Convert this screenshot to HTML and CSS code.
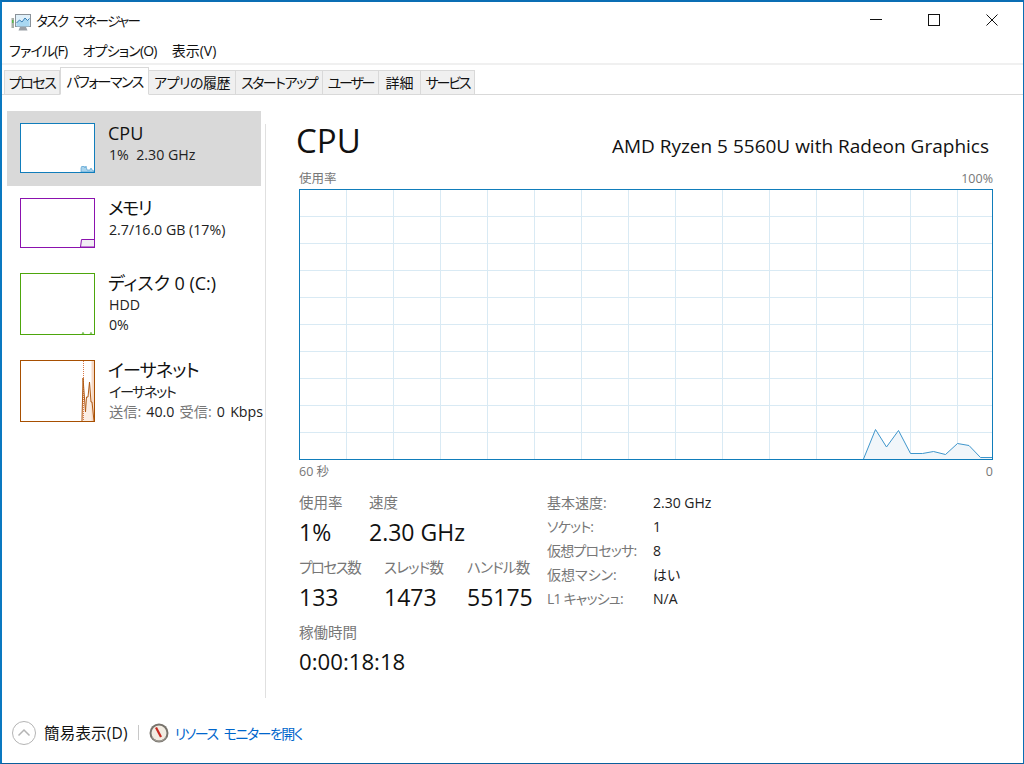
FILE: index.html
```html
<!DOCTYPE html>
<html lang="ja">
<head>
<meta charset="utf-8">
<title>タスク マネージャー</title>
<link rel="stylesheet" href="styles.css">
</head>
<body>
<div class="window">
  <header class="titlebar">
    <svg class="appicon" width="20" height="20" viewBox="0 0 20 20">
      <rect x="0.5" y="6" width="2.5" height="10" fill="#a8b0a8"/>
      <rect x="1" y="8" width="1.500" height="3" fill="#58b848"/>
      <rect x="4.500" y="2.500" width="15" height="12" fill="#dff0fa" stroke="#8a9299"/>
      <path d="M5.500 11l3-3 2.500 2 3-4 2.500 2.500 2-2v8h-13z" fill="#a9d8f2"/>
      <path d="M5.500 11l3-3 2.500 2 3-4 2.500 2.500 2-2" fill="none" stroke="#3a7fb5"/>
      <path d="M9 15h6l1.500 3.500h-9z" fill="#9aa0a6"/>
    </svg>
    <span class="apptitle">タスク マネージャー</span>
    <div class="controls">
      <svg class="ctl" width="46" height="38" viewBox="0 0 46 38"><path d="M11 17.500h12" stroke="#111" fill="none"/></svg>
      <svg class="ctl" width="58" height="38" viewBox="0 0 58 38"><rect x="23.500" y="12.500" width="11" height="11" stroke="#111" fill="none"/></svg>
      <svg class="ctl" width="60" height="38" viewBox="0 0 60 38"><path d="M23.500 12.500l11 11M34.500 12.500l-11 11" stroke="#111" fill="none"/></svg>
    </div>
  </header>
  <nav class="menubar">
    <span class="menuitem kana">ファイル(F)</span>
    <span class="menuitem kana">オプション(O)</span>
    <span class="menuitem">表示(V)</span>
  </nav>
  <div class="tabs">
    <span class="tab kana-wide w-proc">プロセス</span>
    <span class="tab kana-wide active w-perf">パフォーマンス</span>
    <span class="tab kana-thin w-hist">アプリの履歴</span>
    <span class="tab kana-wide w-start">スタートアップ</span>
    <span class="tab kana-max w-user">ユーザー</span>
    <span class="tab w-det">詳細</span>
    <span class="tab kana-max w-svc">サービス</span>
  </div>
  <div class="content">
    <aside class="sidebar">
      <div class="item selected">
        <svg class="thumb t-cpu" viewBox="0 0 73 48"><path d="M60 48v-4l1-2 1 1 1-1 1 2 1-2 1 4 3 0 1-2 1 2 2 1v1z" fill="#a9d3ec" stroke="#3f96cc" stroke-width=".6"/></svg>
        <div class="itemtext">
          <div class="itemname">CPU</div>
          <div class="itemsub">1%&nbsp; 2.30 GHz</div>
        </div>
      </div>
      <div class="item">
        <svg class="thumb t-mem" viewBox="0 0 73 48"><path d="M59.500 48l1-7.500h13v7.500z" fill="#f1eef4" stroke="#8b12ae"/></svg>
        <div class="itemtext">
          <div class="itemname kana-wide">メモリ</div>
          <div class="itemsub">2.7/16.0 GB (17%)</div>
        </div>
      </div>
      <div class="item tall">
        <svg class="thumb t-disk" viewBox="0 0 73 60"><path d="M61 60l1-2 1 2zM69 60l1-2 1 2z" fill="#7cc05a" stroke="#7cc05a" stroke-width=".6"/></svg>
        <div class="itemtext">
          <div class="itemname">ディスク 0 (C:)</div>
          <div class="itemsub">HDD</div>
          <div class="itemsub">0%</div>
        </div>
      </div>
      <div class="item tall">
        <svg class="thumb t-net" viewBox="0 0 73 60">
          <path d="M60 60l2-43 3 34 1-15h2l1-15 2 20 1 1 2 18z" fill="#fbeee4"/>
          <rect x="70.500" y="0" width="2.500" height="60" fill="#f6d9c6"/>
          <path d="M62.500 0v60" stroke="#d9794a" stroke-dasharray="1 1" fill="none"/>
          <path d="M61 60l1-43 2.500 34 1-15h1.500l1.500-15 1.500 20h1l2 19" fill="none" stroke="#b05a14" stroke-width="1"/>
        </svg>
        <div class="itemtext">
          <div class="itemname kana">イーサネット</div>
          <div class="itemsub kana-wide">イーサネット</div>
          <div class="itemsub spaced"><span class="dim">送信:</span> 40.0 <span class="dim">受信:</span> 0 Kbps</div>
        </div>
      </div>
    </aside>
    <div class="divider"></div>
    <main class="panel">
      <div class="heading">
        <h1 class="bigtitle">CPU</h1>
        <div class="model">AMD Ryzen 5 5560U with Radeon Graphics</div>
      </div>
      <div class="chartwrap">
        <div class="axis axis-top"><span>使用率</span><span>100%</span></div>
        <svg class="chart" width="692" height="269" viewBox="300 190 692 269">
          <path class="grid" d="M346.500 190v269M393.500 190v269M440.500 190v269M487.500 190v269M534.500 190v269M581.500 190v269M628.500 190v269M675.500 190v269M722.500 190v269M769.500 190v269M816.500 190v269M863.500 190v269M910.500 190v269M957.500 190v269M300 216.500h692M300 243.500h692M300 270.500h692M300 297.500h692M300 324.500h692M300 351.500h692M300 378.500h692M300 405.500h692M300 432.500h692"/>
          <path class="area" d="M863.500 459L875.500 429.500 886.500 447 898.500 430.500 910.500 453.500 922.500 453.500 933.500 451.500 945.500 454.500 957.500 443.500 969 445.500 980.500 457.500 992 457.500V459z"/>
          <path class="line" d="M863.500 459L875.500 429.500 886.500 447 898.500 430.500 910.500 453.500 922.500 453.500 933.500 451.500 945.500 454.500 957.500 443.500 969 445.500 980.500 457.500 992 457.500"/>
        </svg>
        <div class="axis axis-bottom"><span>60 秒</span><span>0</span></div>
      </div>
      <div class="stats">
        <div class="statcols">
          <div class="statrow">
            <div class="stat s70"><div class="statlabel">使用率</div><div class="statvalue">1%</div></div>
            <div class="stat"><div class="statlabel">速度</div><div class="statvalue">2.30 GHz</div></div>
          </div>
          <div class="statrow">
            <div class="stat s85"><div class="statlabel kana-wide">プロセス数</div><div class="statvalue">133</div></div>
            <div class="stat s83"><div class="statlabel kana">スレッド数</div><div class="statvalue">1473</div></div>
            <div class="stat"><div class="statlabel kana">ハンドル数</div><div class="statvalue">55175</div></div>
          </div>
          <div class="statrow">
            <div class="stat"><div class="statlabel">稼働時間</div><div class="statvalue uptime">0:00:18:18</div></div>
          </div>
        </div>
        <dl class="specs">
          <dt>基本速度:</dt><dd>2.30 GHz</dd>
          <dt class="kana">ソケット:</dt><dd>1</dd>
          <dt class="kana">仮想プロセッサ:</dt><dd>8</dd>
          <dt>仮想マシン:</dt><dd>はい</dd>
          <dt class="kana">L1 キャッシュ:</dt><dd>N/A</dd>
        </dl>
      </div>
    </main>
  </div>
  <footer class="footer">
    <svg class="fewer" width="24" height="24" viewBox="0 0 24 24"><circle cx="12" cy="12" r="11.500" fill="#fff" stroke="#b4b4b4"/><path d="M6.500 14.500L12 9l5.500 5.500" fill="none" stroke="#b4b4b4" stroke-width="1.500"/></svg>
    <span class="fewertext">簡易表示(D)</span>
    <span class="sep"></span>
    <svg class="gauge" width="20" height="20" viewBox="0 0 20 20"><circle cx="10" cy="10" r="9.500" fill="#77736c"/><circle cx="10" cy="10" r="7.500" fill="#f2ece2"/><path d="M7 4.500l5 9.500" stroke="#c92a22" stroke-width="2.200" fill="none"/><path d="M3 14a8 8 0 0 0 14 0" fill="none" stroke="#a8a49c"/></svg>
    <span class="link">リソース モニターを開く</span>
  </footer>
</div>
</body>
</html>
```

FILE: styles.css
```css
* { box-sizing: border-box; }
html, body { margin: 0; padding: 0; background: #fff; }
body {
  font-family: "Open Sans", "Noto Sans CJK JP", sans-serif;
  font-feature-settings: "palt";
  color: #111;
  font-size: 14px;
}
.kana-thin { letter-spacing: -0.5px; }
.kana { letter-spacing: -0.8px; }
.kana-wide { letter-spacing: -1.5px; }
.kana-max { letter-spacing: -2.2px; }
.window {
  width: 1024px;
  height: 764px;
  overflow: hidden;
  display: flex;
  flex-direction: column;
  border-top: 2px solid #0a6eb4;
  border-left: 2px solid #0a78c0;
  border-right: 1px solid #0a6eb4;
  border-bottom: 1px solid #0a5f9c;
}
.titlebar { height: 38px; display: flex; align-items: center; padding-left: 9px; }
.appicon { margin-right: 5px; margin-top: 1px; }
.apptitle { font-size: 13.500px; letter-spacing: -1.500px; word-spacing: 4px; margin-top: -2px; }
.controls { margin-left: auto; display: flex; }
.ctl { display: block; }
.menubar { height: 23px; display: flex; align-items: center; padding-left: 7px; padding-bottom: 1px; }
.menuitem { font-size: 14px; margin-right: 15px; line-height: 20px; }
.tabs {
  height: 32px;
  border-top: 2px solid #f0f0f0;
  border-bottom: 1px solid #d9d9d9;
  display: flex;
  align-items: flex-end;
  padding-left: 2px;
}
.tab {
  height: 25px;
  margin-bottom: -1px;
  background: #f0f0f0;
  border: 1px solid #d9d9d9;
  border-left-width: 0;
  font-size: 14px;
  line-height: 24px;
  text-align: center;
  white-space: nowrap;
}
.tab.active { height: 28px; background: #fff; border-bottom-color: #fff; border-left-width: 1px; line-height: 27px; }
.w-proc { width: 56px; border-left-width: 1px; }
.w-perf { width: 89px; }
.w-hist { width: 87px; }
.w-start { width: 87px; }
.w-user { width: 56px; }
.w-det { width: 42px; }
.w-svc { width: 54px; }
.content { flex: 1; display: flex; min-height: 0; }
.sidebar { width: 254px; margin-left: 5px; padding-top: 16px; flex: none; }
.item { display: flex; padding: 12px 0 13px 13px; }
.item.selected { background: #d9d9d9; }
.thumb { display: block; width: 75px; height: 50px; flex: none; background: #fff; border: 1px solid; }
.tall .thumb { height: 62px; }
.t-cpu { border-color: #117dbb; }
.t-mem { border-color: #8b12ae; }
.t-disk { border-color: #4da60c; }
.t-net { border-color: #a74f01; }
.itemtext { margin-left: 13px; margin-top: -2px; white-space: nowrap; }
.itemname { font-size: 18px; line-height: 24px; }
.itemsub { font-size: 14.200px; line-height: 20px; color: #222; padding-left: 1px; }
.spaced { word-spacing: 1.500px; }
.dim { color: #777; }
.divider { width: 1px; margin: 29px 0 1px 4px; background: #e0e0e0; flex: none; }
.panel { flex: 1; padding: 0 30px 0 31px; min-width: 0; }
.heading { display: flex; justify-content: space-between; align-items: flex-end; height: 68px; padding-top: 24px; padding-right: 4px; }
.bigtitle { font-weight: 400; font-size: 33px; line-height: 44px; margin: 0; margin-left: -1px; }
.model { font-size: 19px; line-height: 26px; margin-bottom: 4px; white-space: nowrap; }
.chartwrap { margin-left: 2px; width: 694px; }
.axis { display: flex; justify-content: space-between; font-size: 12.500px; color: #777; line-height: 16px; }
.axis-top { height: 24px; padding-top: 6px; margin-top: 2px; }
.axis-bottom { height: 19px; padding-top: 4px; }
.chart { display: block; border: 1px solid #117dbb; width: 694px; height: 271px; box-sizing: border-box; }
.grid { stroke: #d9eaf4; fill: none; }
.area { fill: #f1f6fa; }
.line { stroke: #3f96cc; fill: none; stroke-width: 1; }
.stats { display: flex; margin-left: 2px; margin-top: 10px; }
.statcols { width: 248px; flex: none; }
.statrow { display: flex; height: 65px; }
.stat { flex: none; white-space: nowrap; }
.s70 { width: 70px; }
.s85 { width: 85px; }
.s83 { width: 83px; }
.statlabel { font-size: 14.500px; color: #777; line-height: 20px; height: 20px; margin-top: 4px; }
.statvalue { font-size: 23px; line-height: 34px; height: 34px; margin-top: 2px; }
.uptime { font-size: 22.200px; }
.specs { margin: 4px 0 0; display: grid; grid-template-columns: 106px auto; grid-auto-rows: 24px; font-size: 14px; line-height: 20px; }
.specs dt { color: #777; }
.specs dd { margin: 0; color: #222; }
.footer { height: 64px; display: flex; align-items: center; padding: 3px 0 0 10px; flex: none; }
.fewer { flex: none; }
.fewertext { font-size: 15.500px; margin-left: 8px; letter-spacing: 0.200px; }
.sep { width: 1px; height: 15px; background: #c8c8c8; margin: 0 10px; }
.link { font-size: 14px; letter-spacing: -1.500px; word-spacing: 4px; color: #0066cc; margin-left: 6px; }
```
